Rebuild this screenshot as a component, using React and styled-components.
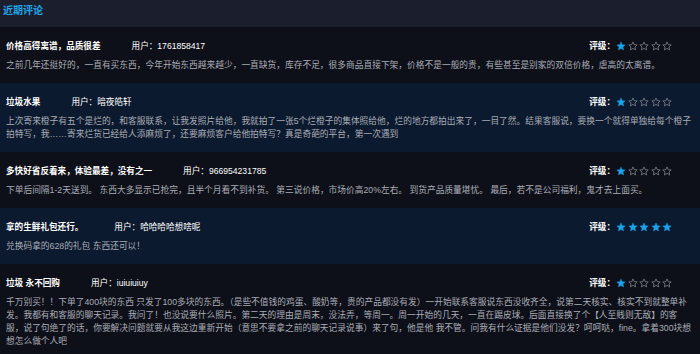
import React from 'react';
import styled, { createGlobalStyle } from 'styled-components';

const GlobalStyle = createGlobalStyle`
  html, body {
    margin: 0;
    padding: 0;
    background: #0e1019;
  }
  body {
    font-family: "Liberation Sans", "Noto Sans CJK SC", sans-serif;
  }
`;

const Panel = styled.div`
  width: 700px;
  display: flex;
  flex-direction: column;
`;

/* 标题栏 */
const Header = styled.div`
  height: 27px;
  box-sizing: border-box;
  padding: 4px 3px;
  background: #1b1e2c;
  color: #1ea6e8;
  font-weight: 700;
  font-size: 10px;
  line-height: 14px;
`;

const Row = styled.div`
  padding: 12px 6px 11px 6px;
  background: ${(p) => (p.alt ? '#0c1a2f' : '#0e1019')};
`;

const RowHead = styled.div`
  display: flex;
  align-items: center;
  height: 14px;
  margin-bottom: 6px;
  font-size: 8.6px;
  line-height: 14px;
  color: #ffffff;
`;

const Title = styled.span`
  font-weight: 700;
  margin-right: 31px;
`;

const User = styled.span`
  flex: 1;
`;

const Rating = styled.div`
  display: flex;
  align-items: center;
  padding-right: 22px;
  font-weight: 700;
`;

const Stars = styled.div`
  display: flex;
  gap: 1.5px;
  margin-left: 1px;
`;

const Content = styled.div`
  font-size: 8.73px;
  line-height: 13px;
  color: #a9adb6;
`;

const Star = ({ on }) => (
  <svg width="10" height="10" viewBox="0 0 24 24">
    <path
      d="M12 2.2l2.9 6.6 7.2.7-5.4 4.8 1.6 7.1L12 17.7l-6.3 3.7 1.6-7.1L1.9 9.5l7.2-.7z"
      fill={on ? '#1aa3e8' : 'none'}
      stroke={on ? '#1aa3e8' : '#7a7e88'}
      strokeWidth={on ? 1 : 2}
      strokeLinejoin="round"
    />
  </svg>
);

const reviews = [
  {
    title: '价格高得离谱，品质很差',
    user: '1761858417',
    score: 1,
    text: '之前几年还挺好的，一直有买东西，今年开始东西越来越少，一直缺货，库存不足，很多商品直接下架，价格不是一般的贵，有些甚至是别家的双倍价格，虐高的太离谱。',
  },
  {
    title: '垃圾水果',
    user: '暗夜皓轩',
    score: 1,
    text: '上次寄来橙子有五个是烂的，和客服联系，让我发照片给他，我就拍了一张5个烂橙子的集体照给他，烂的地方都拍出来了，一目了然。结果客服说，要换一个就得单独给每个橙子拍特写，我……寄来烂货已经给人添麻烦了，还要麻烦客户给他拍特写？真是奇葩的平台，第一次遇到',
  },
  {
    title: '多快好省反着来，体验最差，没有之一',
    user: '966954231785',
    score: 1,
    text: '下单后间隔1-2天送到。 东西大多显示已抢完，且半个月看不到补货。 第三说价格，市场价高20%左右。 到货产品质量堪忧。 最后，若不是公司福利，鬼才去上面买。',
  },
  {
    title: '拿的生鲜礼包还行。',
    user: '哈哈哈哈想啥呢',
    score: 5,
    text: '兑换码拿的628的礼包 东西还可以！',
  },
  {
    title: '垃圾 永不回购',
    user: 'iuiuiuiuy',
    score: 1,
    text: '千万别买！！下单了400块的东西 只发了100多块的东西。（是些不值钱的鸡蛋、酸奶等，贵的产品都没有发）一开始联系客服说东西没收齐全，说第二天核实、核实不到就整单补发。我都有和客服的聊天记录。我问了！也没说要什么照片。第二天的理由是周末，没法弄，等周一。周一开始的几天，一直在踢皮球。后面直接换了个【人至贱则无敌】的客服，说了句绝了的话，你要解决问题就要从我这边重新开始（意思不要拿之前的聊天记录说事）来了句，他是他 我不管。问我有什么证据是他们没发？呵呵哒，fine。拿着300块想想怎么做个人吧',
  },
];

const App = () => {
  return (
    <Panel>
      <GlobalStyle />
      <Header>近期评论</Header>
      {reviews.map((r, i) => (
        <Row key={i} alt={i % 2 === 1}>
          <RowHead>
            <Title>{r.title}</Title>
            <User>用户：{r.user}</User>
            <Rating>
              评级：
              <Stars>
                {[1, 2, 3, 4, 5].map((n) => (
                  <Star key={n} on={n <= r.score} />
                ))}
              </Stars>
            </Rating>
          </RowHead>
          <Content>{r.text}</Content>
        </Row>
      ))}
    </Panel>
  );
};

export default App;
